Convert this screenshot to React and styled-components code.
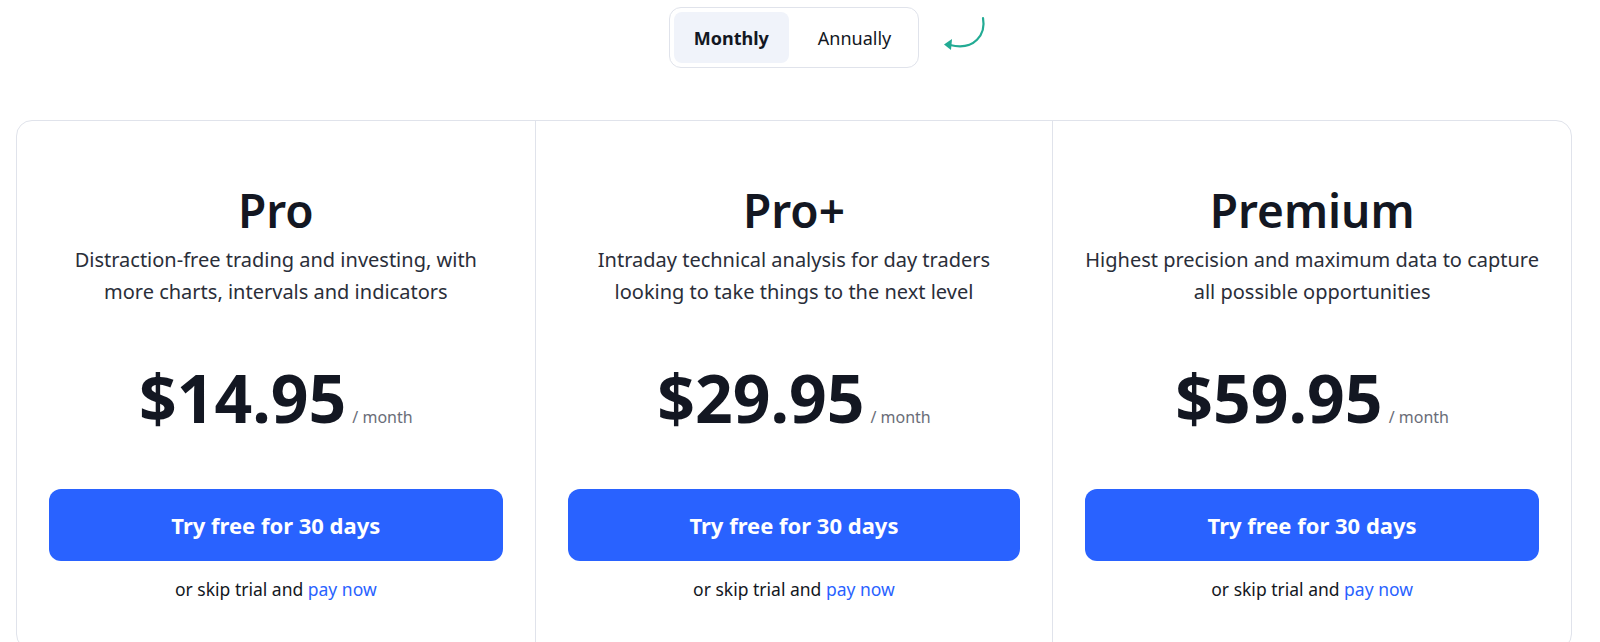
import React, { useState } from 'react';
import styled, { createGlobalStyle } from 'styled-components';

const GlobalStyle = createGlobalStyle`
  body {
    margin: 0;
    background: #fff;
    font-family: "Noto Sans", "Open Sans", sans-serif;
    color: #131722;
  }
`;

const Page = styled.div`
  width: 1556px;
  margin-left: 16px;
`;

const ToggleRow = styled.div`
  display: flex;
  justify-content: center;
  padding-top: 7px;
`;

const ToggleWrap = styled.div`
  position: relative;
`;

const Toggle = styled.div`
  display: flex;
  gap: 8px;
  padding: 4px;
  border: 1px solid #e0e3eb;
  border-radius: 12px;
  background: #fff;
`;

const ToggleButton = styled.button`
  height: 51px;
  padding: ${({ active }) => (active ? '0 20px' : '0 23px 0 21px')};
  border: none;
  border-radius: 8px;
  background: ${({ active }) => (active ? '#f0f3fa' : 'transparent')};
  color: #131722;
  font-family: inherit;
  font-size: 18px;
  font-weight: ${({ active }) => (active ? 700 : 400)};
  cursor: pointer;
`;

const Arrow = styled.svg`
  position: absolute;
  left: calc(100% + 22px);
  top: 9px;
`;

const Card = styled.div`
  display: grid;
  grid-template-columns: repeat(3, 1fr);
  margin-top: 52px;
  border: 1px solid #e0e3eb;
  border-radius: 16px;
`;

const Plan = styled.div`
  display: flex;
  flex-direction: column;
  align-items: center;
  padding: 64px 32px 48px;
  text-align: center;
  & + & {
    border-left: 1px solid #e0e3eb;
  }
`;

const Title = styled.h2`
  margin: 0 0 9px;
  font-size: 46px;
  line-height: 50px;
  font-weight: 600;
  color: #131722;
`;

const Description = styled.p`
  margin: 0;
  min-height: 64px;
  font-size: 20px;
  line-height: 32px;
  color: #2a2e39;
`;

const Line = styled.span`
  display: block;
  white-space: nowrap;
`;

const PriceRow = styled.div`
  display: flex;
  align-items: baseline;
  gap: 6px;
  margin-top: 56px;
`;

const Price = styled.span`
  font-size: 66px;
  line-height: 66px;
  font-weight: 700;
  color: #131722;
`;

const Period = styled.span`
  font-size: 16px;
  color: #6a6d78;
`;

const TrialButton = styled.button`
  width: 100%;
  height: 72px;
  margin-top: 59px;
  border: none;
  border-radius: 12px;
  background: #2962ff;
  color: #fff;
  font-family: inherit;
  font-size: 22px;
  font-weight: 700;
  cursor: pointer;
`;

const SkipNote = styled.div`
  margin-top: 16px;
  font-size: 17.5px;
  line-height: 24px;
  color: #131722;
`;

const PayLink = styled.a`
  color: #2962ff;
  text-decoration: none;
`;

const plans = [
  {
    name: 'Pro',
    description: ['Distraction-free trading and investing, with', 'more charts, intervals and indicators'],
    price: '$14.95',
  },
  {
    name: 'Pro+',
    description: ['Intraday technical analysis for day traders', 'looking to take things to the next level'],
    price: '$29.95',
  },
  {
    name: 'Premium',
    description: ['Highest precision and maximum data to capture', 'all possible opportunities'],
    price: '$59.95',
  },
];

const CurvedArrow = () => (
  <Arrow width="46" height="38" viewBox="0 0 46 38" fill="none">
    <path
      d="M42 2 C45 18 34 35 9 29"
      stroke="#22ab94"
      strokeWidth="2.2"
      strokeLinecap="round"
    />
    <path d="M3 28.5 L11 23 L10 34 Z" fill="#22ab94" />
  </Arrow>
);

const App = () => {
  const [period, setPeriod] = useState('monthly');

  return (
    <Page>
      <GlobalStyle />
      <ToggleRow>
        <ToggleWrap>
          <Toggle>
            <ToggleButton active={period === 'monthly'} onClick={() => setPeriod('monthly')}>
              Monthly
            </ToggleButton>
            <ToggleButton active={period === 'annually'} onClick={() => setPeriod('annually')}>
              Annually
            </ToggleButton>
          </Toggle>
          <CurvedArrow />
        </ToggleWrap>
      </ToggleRow>
      <Card>
        {plans.map((plan) => (
          <Plan key={plan.name}>
            <Title>{plan.name}</Title>
            <Description>
              {plan.description.map((line) => (
                <Line key={line}>{line}</Line>
              ))}
            </Description>
            <PriceRow>
              <Price>{plan.price}</Price>
              <Period>/ month</Period>
            </PriceRow>
            <TrialButton>Try free for 30 days</TrialButton>
            <SkipNote>
              or skip trial and <PayLink href="#">pay now</PayLink>
            </SkipNote>
          </Plan>
        ))}
      </Card>
    </Page>
  );
};

export default App;
